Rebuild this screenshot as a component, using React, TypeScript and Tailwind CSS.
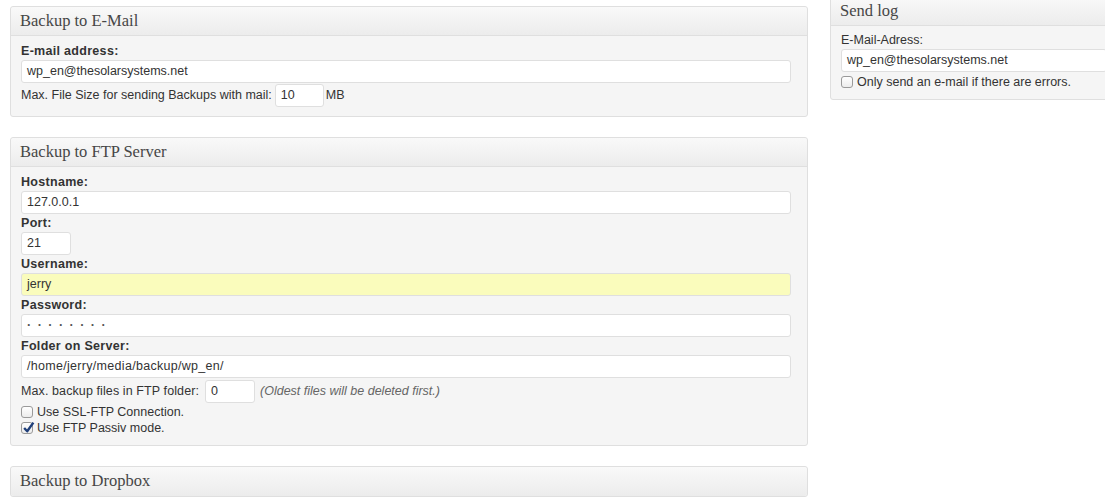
import React from 'react';

const sans = "font-['Liberation_Sans',Arial,sans-serif]";

function Panel({ title, children }: { title: string; children?: React.ReactNode }) {
  return (
    <div className="rounded-[3px] border border-[#dfdfdf] bg-[#f5f5f5]">
      <div
        className={`h-[29px] px-[9px] flex items-center bg-gradient-to-b from-[#f9f9f9] to-[#ececec] font-['Liberation_Serif',Georgia,serif] text-[16.5px] text-[#464646] ${
          children ? 'border-b border-[#dfdfdf] rounded-t-[3px]' : 'rounded-[3px]'
        }`}
      >
        {title}
      </div>
      {children && <div className="pl-[10px] pr-[16px] pt-[6px] pb-[9px]">{children}</div>}
    </div>
  );
}

function Label({ children, bold = true }: { children: React.ReactNode; bold?: boolean }) {
  return (
    <div className={`h-[18px] leading-[18px] text-[12.5px] text-[#333] ${bold ? 'font-bold tracking-[0.3px]' : ''}`}>
      {children}
    </div>
  );
}

function Field({ value, className = '', bg = 'bg-white' }: { value: string; className?: string; bg?: string }) {
  return (
    <div
      className={`h-[23px] rounded-[3px] border border-[#dfdfdf] ${bg} px-[5px] flex items-center text-[12.5px] text-[#333] ${className}`}
    >
      {value}
    </div>
  );
}

function Check({ checked, label }: { checked?: boolean; label: string }) {
  return (
    <div className="h-[16px] flex items-center gap-[4px] text-[12.5px] text-[#333]">
      <span className="relative w-[12px] h-[12px] rounded-[3px] border border-[#9a9a9a] bg-gradient-to-b from-white to-[#ececec] shrink-0">
        {checked && (
          <svg viewBox="0 0 12 12" className="absolute -top-[2px] left-[0px] w-[13px] h-[13px]">
            <path d="M2 6.5 L4.8 9.5 L10.5 1.5" fill="none" stroke="#1f3f7a" strokeWidth="2.2" strokeLinejoin="round" />
          </svg>
        )}
      </span>
      <span>{label}</span>
    </div>
  );
}

export default function App() {
  return (
    <div className={`w-[1105px] h-[499px] overflow-hidden bg-white ${sans}`}>
      <div className="flex gap-[22px] pl-[10px]">
        <div className="w-[798px] shrink-0 flex flex-col gap-[20px] pt-[6px]">
          <Panel title="Backup to E-Mail">
            <Label>E-mail address:</Label>
            <Field value="wp_en@thesolarsystems.net" />
            <div className="h-[24px] flex items-center text-[12.5px] text-[#333]">
              <span>Max. File Size for sending Backups with mail:</span>
              <Field value="10" className="w-[49px] h-[22px] ml-[3px] mr-[2px]" />
              <span>MB</span>
            </div>
          </Panel>

          <Panel title="Backup to FTP Server">
            <Label>Hostname:</Label>
            <Field value="127.0.0.1" />
            <Label>Port:</Label>
            <Field value="21" className="w-[50px]" />
            <Label>Username:</Label>
            <Field value="jerry" bg="bg-[#fafcbc]" />
            <Label>Password:</Label>
            <Field value="· · · · · · · ·" className="text-[#555] tracking-[1.5px] font-bold" />
            <Label>Folder on Server:</Label>
            <Field value="/home/jerry/media/backup/wp_en/" className="tracking-[0.3px]" />
            <div className="h-[26px] flex items-center text-[12.5px] text-[#333]">
              <span className="tracking-[0.1px]">Max. backup files in FTP folder:</span>
              <Field value="0" className="w-[50px] h-[22px] ml-[6px] mr-[5px]" />
              <span className="italic text-[#666]">(Oldest files will be deleted first.)</span>
            </div>
            <Check label="Use SSL-FTP Connection." />
            <Check checked label="Use FTP Passiv mode." />
          </Panel>

          <Panel title="Backup to Dropbox" />
        </div>

        <div className="w-[300px] shrink-0 -mt-[4px]">
          <div className="rounded-[3px] border border-[#dfdfdf] bg-[#f5f5f5]">
            <div className="h-[29px] px-[9px] flex items-center bg-gradient-to-b from-[#f9f9f9] to-[#ececec] border-b border-[#dfdfdf] font-['Liberation_Serif',Georgia,serif] text-[16.5px] text-[#464646]">
              Send log
            </div>
            <div className="pl-[10px] pt-[5px] pb-[9px] w-[276px]">
              <Label bold={false}>E-Mail-Adress:</Label>
              <Field value="wp_en@thesolarsystems.net" className="h-[22px]" />
              <div className="pt-[2px]">
                <Check label="Only send an e-mail if there are errors." />
              </div>
            </div>
          </div>
        </div>
      </div>
    </div>
  );
}
